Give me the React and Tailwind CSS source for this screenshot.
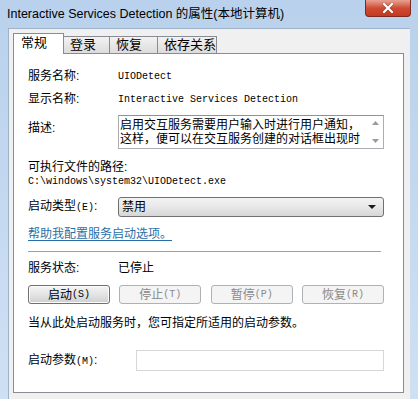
import React from "react";

const CJK = "font-['Liberation_Sans','Noto_Sans_CJK_SC',sans-serif]";
const MONO = "font-['Liberation_Mono','Noto_Sans_CJK_SC',monospace]";

const tabs = ["常规", "登录", "恢复", "依存关系"];
const tabWidths = ["w-[51px]", "w-[46px]", "w-[48px]", "w-[59px]"];

const Label = ({ children, className = "" }) => (
  <div className={`w-[90px] shrink-0 text-[12px] leading-[16px] ${className}`}>
    {children}
  </div>
);

const WinButton = ({ children, disabled }) => (
  <div
    className={
      disabled
        ? "w-[82px] h-[19px] flex items-center justify-center rounded-[3px] border border-[#adb2b5] bg-[#f4f4f4] text-[#8a8a8a] text-[12px] leading-[16px]"
        : "w-[82px] h-[19px] flex items-center justify-center rounded-[3px] border border-[#707070] bg-gradient-to-b from-[#f4f4f4] via-[#e4e4e4] to-[#cfcfcf] text-black text-[12px] leading-[16px] shadow-[inset_0_0_0_1px_#fcfcfc]"
    }
  >
    {children}
  </div>
);

export default function App() {
  return (
    <div className={`w-[418px] h-[399px] overflow-hidden bg-gradient-to-b from-[#b9d1ec] to-[#cfe0f3] flex flex-col ${CJK}`}>
      {/* title bar */}
      <div className="h-[28px] shrink-0 relative flex items-start pt-[6px] pl-[7px]">
        <span className="text-[12.5px] leading-[16px] text-black">
          Interactive Services Detection 的属性(本地计算机)
        </span>
        <div className="absolute right-[7px] top-0 w-[46px] h-[17px] rounded-b-[4px] border border-[#7a2a20] border-t-0 bg-gradient-to-b from-[#e8a293] via-[#cf4b33] to-[#c4391f] flex items-center justify-center">
          <svg width="12" height="10" viewBox="0 0 12 10">
            <path d="M2 1 L10 9 M10 1 L2 9" stroke="#3d1a14" strokeWidth="3.4" strokeLinecap="square" opacity="0.35" />
            <path d="M2 1 L10 9 M10 1 L2 9" stroke="#ffffff" strokeWidth="2.2" strokeLinecap="square" />
          </svg>
        </div>
      </div>

      {/* client area */}
      <div className="ml-[8px] w-[402px] flex-1 bg-[#f0f0f0] border-l border-t border-[#9fb2c8] pl-[4px] pt-[4px] flex flex-col">
        {/* tabs */}
        <div className="flex items-end h-[20px] relative z-10">
          {tabs.map((t, i) =>
            i === 0 ? (
              <div
                key={t}
                className={`${tabWidths[i]} h-[21px] -mb-px bg-white border border-b-0 border-[#898c95] pl-[7px] pt-[1px] text-[13px] leading-[16px]`}
              >
                {t}
              </div>
            ) : (
              <div
                key={t}
                className={`${tabWidths[i]} h-[17px] border border-l-0 border-b-0 border-[#898c95] bg-gradient-to-b from-[#f2f2f2] to-[#dcdcdc] pl-[6px] text-[13px] leading-[16px]`}
              >
                {t}
              </div>
            )
          )}
        </div>

        {/* panel */}
        <div className="w-[391px] flex-1 bg-white border border-[#898c95] pl-[14px] pr-[19px] pt-[14px] flex flex-col">
          <div className="flex items-center h-[16px]">
            <Label>服务名称:</Label>
            <span className={`${MONO} text-[10px]`}>UIODetect</span>
          </div>

          <div className="flex items-center h-[16px] mt-[7px]">
            <Label>显示名称:</Label>
            <span className={`${MONO} text-[10px]`}>Interactive Services Detection</span>
          </div>

          <div className="flex items-start mt-[8px]">
            <Label className="mt-[5px]">描述:</Label>
            <div className="flex-1 h-[34px] border border-[#abadb3] border-t-[#8e9196] flex">
              <div className="flex-1 text-[12px] leading-[14px] pl-[1px] pt-[2px] overflow-hidden">
                启用交互服务需要用户输入时进行用户通知，这样，便可以在交互服务创建的对话框出现时
              </div>
              <div className="w-[16px] flex flex-col items-center justify-between py-[5px]">
                <svg width="7" height="4" viewBox="0 0 7 4">
                  <path d="M0 4 L3.5 0 L7 4 Z" fill="#9a9a9a" />
                </svg>
                <svg width="7" height="4" viewBox="0 0 7 4">
                  <path d="M0 0 L3.5 4 L7 0 Z" fill="#9a9a9a" />
                </svg>
              </div>
            </div>
          </div>

          <div className="h-[16px] mt-[10px] text-[12px] leading-[16px]">可执行文件的路径:</div>
          <div className={`${MONO} h-[14px] text-[10px] leading-[14px]`}>
            C:\windows\system32\UIODetect.exe
          </div>

          <div className="flex items-center mt-[8px]">
            <Label>
              启动类型<span className={`${MONO} text-[10px]`}>(E)</span>:
            </Label>
            <div className="flex-1 h-[20px] rounded-[3px] border border-[#707070] bg-gradient-to-b from-[#f3f3f3] via-[#e8e8e8] to-[#d6d6d6] flex items-center justify-between pl-[3px] pr-[7px]">
              <span className="text-[12px] leading-[16px]">禁用</span>
              <svg width="8" height="4" viewBox="0 0 8 4">
                <path d="M0 0 L8 0 L4 4 Z" fill="#1a1a1a" />
              </svg>
            </div>
          </div>

          <div className="h-[16px] mt-[9px] text-[12px] leading-[16px] text-[#2b6ea4] underline underline-offset-2">
            帮助我配置服务启动选项。
          </div>

          <div className="h-px mt-[9px] bg-[#a0a0a0] mr-[3px]" />

          <div className="flex items-center h-[16px] mt-[8px]">
            <Label>服务状态:</Label>
            <span className="text-[12px] leading-[16px]">已停止</span>
          </div>

          <div className="flex justify-between mt-[9px]">
            <WinButton>
              启动<span className={`${MONO} text-[10px]`}>(S)</span>
            </WinButton>
            <WinButton disabled>
              停止<span className={`${MONO} text-[10px]`}>(T)</span>
            </WinButton>
            <WinButton disabled>
              暂停<span className={`${MONO} text-[10px]`}>(P)</span>
            </WinButton>
            <WinButton disabled>
              恢复<span className={`${MONO} text-[10px]`}>(R)</span>
            </WinButton>
          </div>

          <div className="h-[16px] mt-[11px] text-[12px] leading-[16px]">
            当从此处启动服务时，您可指定所适用的启动参数。
          </div>

          <div className="flex items-center mt-[19px]">
            <div className="w-[108px] shrink-0 text-[12px] leading-[16px]">
              启动参数<span className={`${MONO} text-[10px]`}>(M)</span>:
            </div>
            <div className="flex-1 h-[21px] border border-[#d5d8db] bg-white" />
          </div>
        </div>
        <div className="h-[6px] shrink-0" />
      </div>
    </div>
  );
}
